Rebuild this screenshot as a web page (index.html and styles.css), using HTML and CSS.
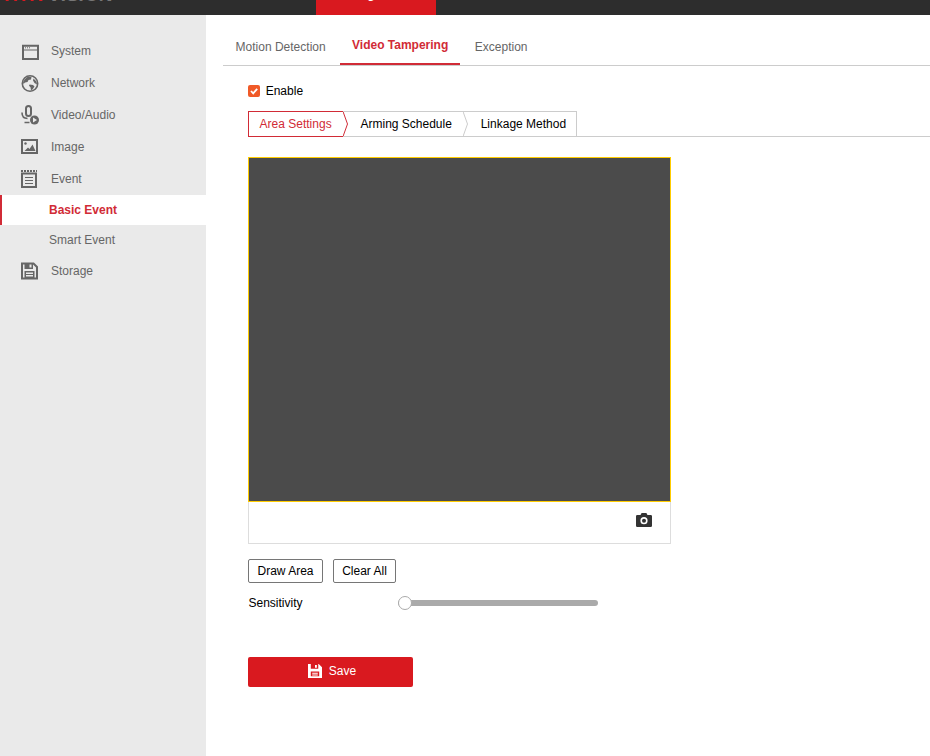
FILE: index.html
```html
<!DOCTYPE html>
<html lang="en">

<head>
    <meta charset="UTF-8">
    <meta name="viewport" content="width=device-width, initial-scale=1.0">
    <title>Video Tampering</title>
    <link rel="stylesheet" href="styles.css">
</head>

<body>
    <!-- top bar, scrolled mostly out of view -->
    <div class="header">
        <div class="logo"><span class="logo-red">HIK</span>VISION</div>
        <div class="nav-current"><span>Configuration</span></div>
    </div>

    <div class="page">
        <!-- left menu -->
        <ul class="menu">
            <li class="menu-item">
                <svg class="menu-icon" viewBox="0 0 18 18">
                    <path fill="none" stroke="#666" stroke-width="2" d="M2 3.700h15V17H2z" />
                    <path fill="none" stroke="#666" stroke-width="1" d="M2 8h15" />
                    <path fill="none" stroke="#666" stroke-width="1" stroke-dasharray="1 1" d="M4 5.800h6" />
                </svg>
                System
            </li>
            <li class="menu-item">
                <svg class="menu-icon" viewBox="0 0 18 18">
                    <circle cx="9" cy="9.500" r="7.700" fill="#eaeaea" stroke="#666" stroke-width="1.600" />
                    <path fill="#666" d="M4 5l3-2.500 3.500.5-.5 2.500-2.500.5-1 2-2.500.5-1.500 1.500L2 8zM8.500 10.500l3.500.5 1.500 1.500-2 3-1.500.8-.5-3-1.500-1.500zM12.500 4.500l3 3 .5 3-2.500-1.500-1.500-2.500z" />
                </svg>
                Network
            </li>
            <li class="menu-item">
                <svg class="menu-icon tall" viewBox="0 0 18 20">
                    <rect x="5" y="1" width="5" height="10" rx="2.500" fill="none" stroke="#666" stroke-width="2" />
                    <path fill="none" stroke="#666" stroke-width="1.600" d="M1 7.500c0 4 2.500 6 5.500 6M3.500 17.500h5" />
                    <circle cx="13.500" cy="15" r="4.500" fill="#666" />
                    <path fill="#eaeaea" d="M12 12.500v5l4-2.500z" />
                </svg>
                Video/Audio
            </li>
            <li class="menu-item">
                <svg class="menu-icon" viewBox="0 0 18 18">
                    <path fill="none" stroke="#666" stroke-width="2" d="M1 2h15v13H1z" />
                    <circle cx="4.500" cy="5.500" r="1.200" fill="#666" />
                    <path fill="#666" d="M3.500 13l3.500-3.500 1.500 1.500L11.500 6.500l3 6.500z" />
                </svg>
                Image
            </li>
            <li class="menu-item">
                <svg class="menu-icon" viewBox="0 0 18 18">
                    <path fill="none" stroke="#666" stroke-width="2" d="M1 3.500h14v13.500H1z" />
                    <path fill="none" stroke="#666" stroke-width="2" stroke-dasharray="2 1" d="M0 1h16" />
                    <path fill="none" stroke="#666" stroke-width="1.200" d="M4 7.500h8M4 10.500h8M4 13.500h8" />
                </svg>
                Event
            </li>
            <li class="sub-item current">Basic Event</li>
            <li class="sub-item">Smart Event</li>
            <li class="menu-item">
                <svg class="menu-icon" viewBox="0 0 18 18">
                    <path fill="none" stroke="#666" stroke-width="2" d="M1 1.500h11.500l3.500 3.500v11.500H1z" />
                    <path fill="#666" d="M3.500 1h8.500v6H3.500zM3.500 9h10v7H3.500z" />
                    <path fill="#eaeaea" d="M8.500 2.500h2v3h-2zM5 10.500h7v1.500H5zM5 13h7v1.500H5z" />
                </svg>
                Storage
            </li>
        </ul>

        <div class="content">
            <ul class="tabs">
                <li class="tab">Motion Detection</li>
                <li class="tab active">Video Tampering</li>
                <li class="tab">Exception</li>
            </ul>

            <div class="panel">
                <label class="enable">
                    <span class="checkbox">
                        <svg viewBox="0 0 12 12" width="12" height="12">
                            <path fill="none" stroke="#fff" stroke-width="1.800" d="M3 6l2.200 2.300L9.200 3.800" />
                        </svg>
                    </span>
                    Enable
                </label>

                <ul class="steps">
                    <li class="step on">
                        Area Settings
                        <svg class="step-arrow" viewBox="0 0 6 26"><path fill="none" stroke="#d12b36" d="M0 .5 4.500 13 0 25.500" /></svg>
                    </li>
                    <li class="step">
                        Arming Schedule
                        <svg class="step-arrow" viewBox="0 0 6 26"><path fill="none" stroke="#ccc" d="M0 .5 4.500 13 0 25.500" /></svg>
                    </li>
                    <li class="step last">Linkage Method</li>
                </ul>

                <div class="player">
                    <div class="video"></div>
                    <div class="player-bar">
                        <svg width="16" height="14" viewBox="0 0 16 14">
                            <path fill="#333" d="M1.300 2H4.500L5.600 0h4.800l1.100 2h3.200A1.300 1.300 0 0 1 16 3.300v9.400a1.300 1.300 0 0 1-1.300 1.300H1.300A1.300 1.300 0 0 1 0 12.700V3.300A1.300 1.300 0 0 1 1.300 2z" />
                            <circle cx="8" cy="7.700" r="2.800" fill="none" stroke="#fff" stroke-width="1.600" />
                        </svg>
                    </div>
                </div>

                <div class="actions">
                    <button class="btn btn-draw">Draw Area</button>
                    <button class="btn btn-clear">Clear All</button>
                </div>

                <div class="sensitivity">
                    <span class="sensitivity-label">Sensitivity</span>
                    <div class="slider"><span class="thumb"></span></div>
                </div>

                <button class="save">
                    <svg width="14" height="14" viewBox="0 0 15 15">
                        <path fill="#fff" d="M0 0h11.500L15 3.500V15H0z" />
                        <path fill="#d9191f" d="M3 0h8v5H3zM3 8h9v5H3z" />
                        <path fill="#fff" d="M7.500 1h2v3h-2zM4.500 9.500h6v1h-6zM4.500 11.200h6v1h-6z" />
                    </svg>
                    Save
                </button>
            </div>
        </div>
    </div>
</body>

</html>
```

FILE: styles.css
```css
* {
    margin: 0;
    padding: 0;
    box-sizing: border-box;
}

html,
body {
    height: 756px;
    overflow: hidden;
}

body {
    background-color: #fff;
    font-family: "Liberation Sans", Arial, sans-serif;
    font-size: 12px;
}

li {
    list-style: none;
}

/* top bar */
.header {
    display: flex;
    height: 15px;
    overflow: hidden;
    background-color: #2d2d2d;
}

.logo {
    width: 311px;
    height: 30px;
    margin-top: -20px;
    margin-left: 5px;
    flex-shrink: 0;
    color: #777;
    font-size: 19px;
    font-weight: bold;
    font-style: italic;
    line-height: 30px;
    white-space: nowrap;
}

.logo-red {
    margin-right: 2px;
    color: #d9191f;
    letter-spacing: 3px;
}

.nav-current {
    width: 120px;
    height: 15px;
    background-color: #d9191f;
    color: #fff;
    font-size: 14px;
    line-height: 14px;
    text-align: center;
}

.nav-current span {
    display: block;
    margin-top: -14px;
}

.page {
    display: flex;
    height: 741px;
}

/* left menu */
.menu {
    width: 206px;
    flex-shrink: 0;
    padding-top: 20px;
    background-color: #eaeaea;
    color: #666;
}

.menu-item {
    display: flex;
    align-items: center;
    height: 32px;
    padding-left: 21px;
}

.menu-icon {
    width: 18px;
    height: 18px;
    margin-right: 12px;
    flex-shrink: 0;
}

.menu-icon.tall {
    height: 20px;
}

.sub-item {
    height: 30px;
    padding-left: 49px;
    line-height: 30px;
}

.sub-item.current {
    padding-left: 47px;
    border-left: 2px solid #d12b36;
    background-color: #fff;
    color: #d12b36;
    font-weight: bold;
}

/* main area */
.content {
    flex: 1;
    min-width: 0;
}

.tabs {
    display: flex;
    height: 51px;
    margin-left: 17px;
    padding-left: 12.600px;
    border-bottom: 1px solid #ccc;
    color: #666;
}

.tab {
    padding: 0 14px;
    line-height: 65px;
}

.tab:first-child {
    padding: 0 14.400px 0 0;
}

.tab:last-child {
    padding-left: 14.500px;
}

.tab.active {
    height: 50px;
    padding: 0 12px;
    border-bottom: 2px solid #d12b36;
    color: #d12b36;
    font-weight: bold;
    line-height: 61px;
}

.panel {
    padding: 19px 0 0 42px;
    color: #000;
}

.enable {
    display: flex;
    align-items: center;
    height: 12px;
    gap: 5.700px;
}

.checkbox {
    display: block;
    width: 12px;
    height: 12px;
    border-radius: 2px;
    background-color: #f05a28;
}

.checkbox svg {
    display: block;
}

.steps {
    display: flex;
    height: 26px;
    margin-top: 14px;
    border-bottom: 1px solid #ccc;
}

.step {
    position: relative;
    width: 120px;
    height: 26px;
    padding-left: 17.500px;
    border-top: 1px solid #ccc;
    border-bottom: 1px solid #ccc;
    line-height: 24px;
}

.step.on {
    width: 95px;
    padding-left: 10.600px;
    border: 1px solid #d12b36;
    border-right: 0;
    color: #d12b36;
}

.step.last {
    width: 114px;
    padding-left: 17.700px;
    border-right: 1px solid #ccc;
}

.step-arrow {
    position: absolute;
    top: -1px;
    right: -6px;
    width: 6px;
    height: 26px;
}

.player {
    width: 423px;
    margin-top: 20px;
}

.video {
    height: 345px;
    border: 1px solid #fc0;
    background-color: #4b4b4b;
}

.player-bar {
    display: flex;
    align-items: center;
    justify-content: flex-end;
    height: 42px;
    padding: 0 18px 6px 0;
    border: 1px solid #ddd;
    border-top: 0;
}

.actions {
    display: flex;
    gap: 10px;
    margin-top: 15px;
}

.btn {
    height: 24px;
    border: 1px solid #767676;
    border-radius: 2px;
    background-color: #fff;
    color: #000;
    font-family: inherit;
    font-size: 12px;
}

.btn-draw {
    width: 75px;
}

.btn-clear {
    width: 63px;
}

.sensitivity {
    display: flex;
    align-items: center;
    height: 14px;
    margin-top: 13px;
}

.sensitivity-label {
    width: 150px;
    padding-left: .500px;
}

.slider {
    position: relative;
    width: 200px;
    height: 6px;
    border-radius: 3px;
    background-color: #aaa;
}

.thumb {
    position: absolute;
    top: -4px;
    left: 0;
    width: 14px;
    height: 14px;
    border: 1px solid #aaa;
    border-radius: 50%;
    background-color: #fff;
}

.save {
    display: flex;
    align-items: center;
    justify-content: center;
    gap: 7px;
    width: 165px;
    height: 30px;
    margin-top: 47px;
    padding: 0 0 2px 3px;
    border: 0;
    border-radius: 2px;
    background-color: #d9191f;
    color: #fff;
    font-family: inherit;
    font-size: 12px;
}
```
